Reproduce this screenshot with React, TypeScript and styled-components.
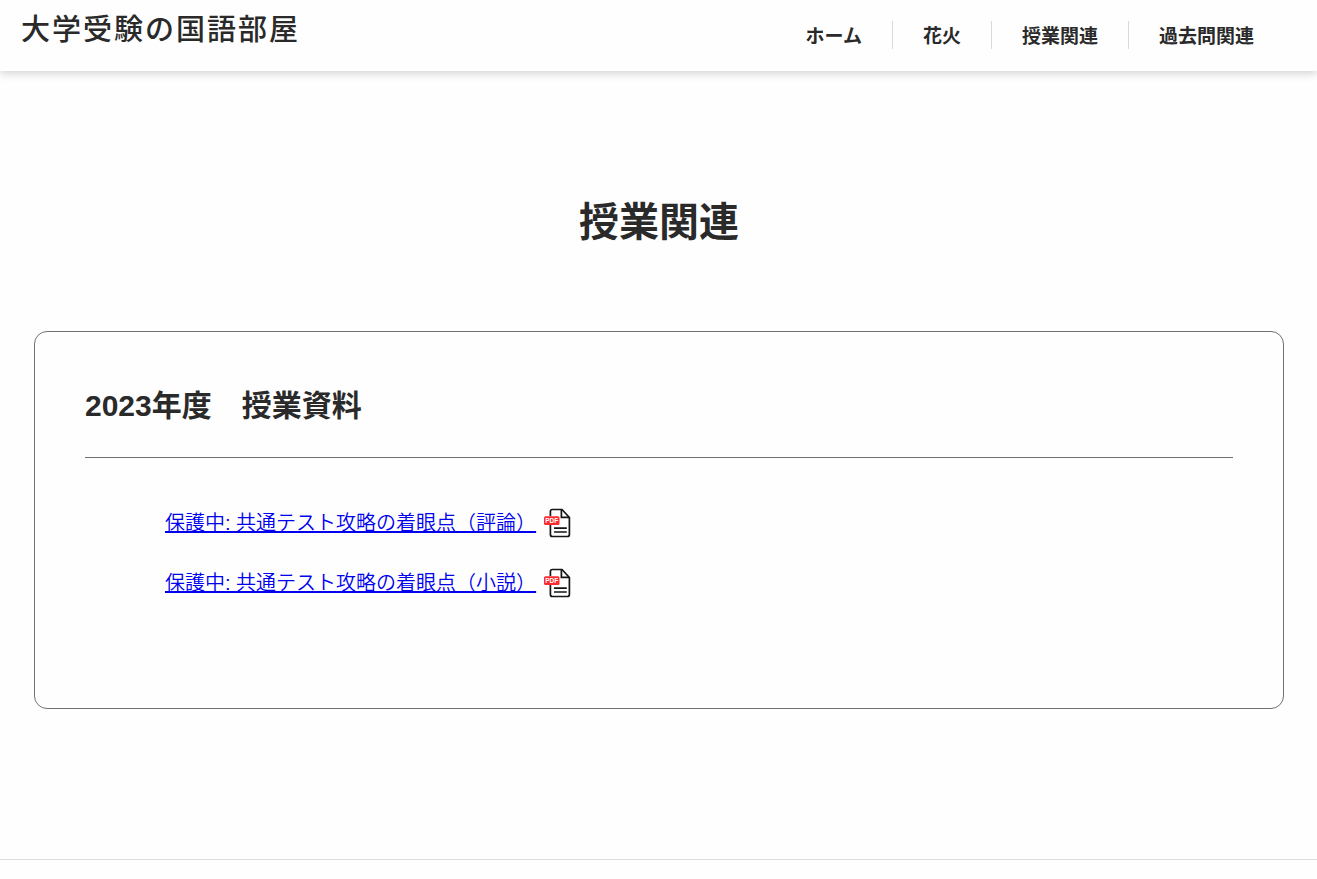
import React from "react";
import styled, { createGlobalStyle } from "styled-components";

const GlobalStyle = createGlobalStyle`
  *, *::before, *::after { box-sizing: border-box; }
  body {
    margin: 0;
    background: #fefefe;
    color: #2a2a2a;
    font-family: "Liberation Sans", "Noto Sans CJK JP", sans-serif;
  }
`;

const Header = styled.header`
  display: flex;
  justify-content: space-between;
  align-items: flex-start;
  min-height: 71px;
  padding: 0 33px 0 21px;
  background: #fefefe;
  box-shadow: 0 3px 8px rgba(0, 0, 0, 0.16);
`;

const SiteName = styled.p`
  margin: 0;
  padding-top: 10px;
  font-size: 29px;
  font-weight: 500;
  line-height: 40px;
  letter-spacing: 2px;
`;

const NavList = styled.ul`
  display: flex;
  margin: 0;
  padding: 21px 0 0;
  list-style: none;
`;

const NavItem = styled.li`
  padding: 0 30px;

  & + & {
    border-left: 1px solid #d9d9d9;
  }
`;

const NavLink = styled.a`
  display: block;
  color: inherit;
  font-size: 19px;
  font-weight: bold;
  line-height: 28px;
  font-family: "Noto Sans CJK JP", sans-serif;
  text-decoration: none;
`;

const Main = styled.main`
  padding: 121px 33px 150px 34px;
`;

const PageTitle = styled.h1`
  margin: 0 0 79px;
  font-size: 40px;
  font-weight: bold;
  line-height: 60px;
  text-align: center;
`;

const Card = styled.section`
  min-height: 378px;
  padding: 50px;
  border: 1px solid #707070;
  border-radius: 13px;
`;

const CardTitle = styled.h2`
  margin: 0 0 50px;
  padding-bottom: 27px;
  border-bottom: 1px solid #707070;
  font-size: 30px;
  font-weight: bold;
  line-height: 48px;
`;

const FileList = styled.ul`
  display: grid;
  gap: 30px;
  margin: 0;
  padding: 0 0 0 80px;
  list-style: none;
`;

const FileItem = styled.li`
  display: flex;
  align-items: center;
  gap: 8px;
  min-height: 30px;
`;

const FileLink = styled.a`
  color: #0000ee;
  font-size: 20px;
  font-weight: 350;
  line-height: 30px;
  text-decoration-thickness: 2px;
`;

const Footer = styled.footer`
  border-top: 1px solid #dcdcdc;
`;

const PdfIcon = () => (
  <svg width="28" height="30" viewBox="0 0 28 30" fill="none" aria-hidden="true">
    <path
      d="M6.4 8V3.5Q6.4 1.5 8.4 1.5H18L25.4 9.5V26.5Q25.4 28.5 23.4 28.5H8.4Q6.4 28.5 6.4 26.5V17"
      stroke="#151515"
      strokeWidth="1.7"
    />
    <path d="M17.4 2V9.3H25" stroke="#151515" strokeWidth="1.7" />
    <path d="M10 20.2H22.8M10 24H22.8" stroke="#151515" strokeWidth="1.7" />
    <rect y="8.3" width="15.5" height="8.7" rx="1.5" fill="#fb2a30" />
    <text
      x="7.7"
      y="15"
      textAnchor="middle"
      fill="#fff"
      fontFamily="Liberation Sans, sans-serif"
      fontSize="6.5"
      fontWeight="bold"
    >
      PDF
    </text>
  </svg>
);

const pages = ["ホーム", "花火", "授業関連", "過去問関連"];
const files = [
  "保護中: 共通テスト攻略の着眼点（評論）",
  "保護中: 共通テスト攻略の着眼点（小説）",
];

export default function App() {
  return (
    <>
      <GlobalStyle />
      <Header>
        <SiteName>大学受験の国語部屋</SiteName>
        <nav>
          <NavList>
            {pages.map((page) => (
              <NavItem key={page}>
                <NavLink href="#">{page}</NavLink>
              </NavItem>
            ))}
          </NavList>
        </nav>
      </Header>
      <Main>
        <PageTitle>授業関連</PageTitle>
        <Card>
          <CardTitle>2023年度　授業資料</CardTitle>
          <FileList>
            {files.map((file) => (
              <FileItem key={file}>
                <FileLink href="#">{file}</FileLink>
                <PdfIcon />
              </FileItem>
            ))}
          </FileList>
        </Card>
      </Main>
      <Footer />
    </>
  );
}
